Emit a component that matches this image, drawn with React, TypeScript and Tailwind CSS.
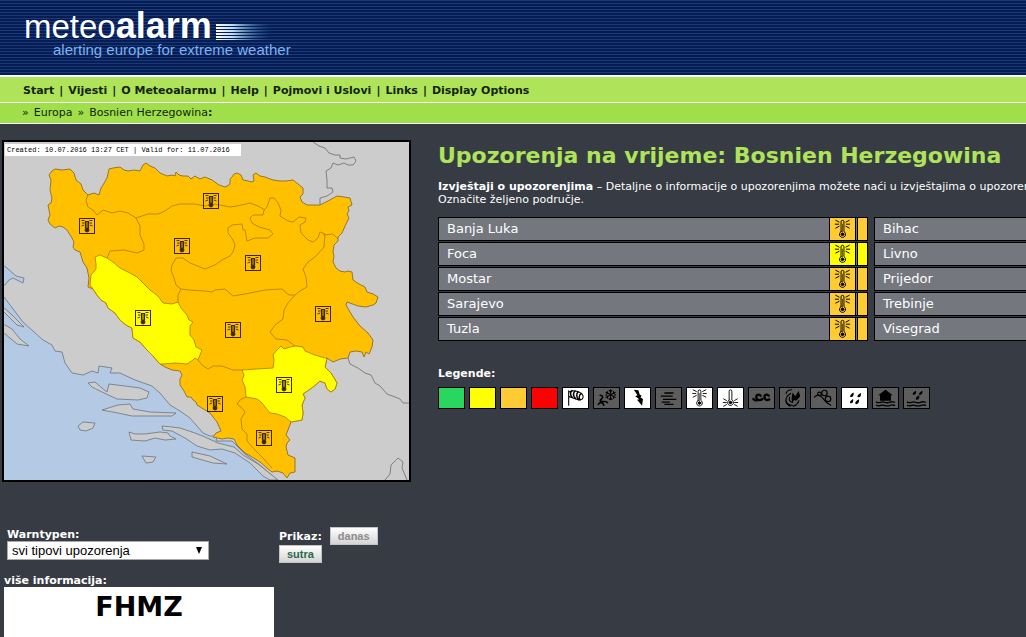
import React from "react";

type Level = "orange" | "yellow";

const navLinks = ["Start", "Vijesti", "O Meteoalarmu", "Help", "Pojmovi i Uslovi", "Links", "Display Options"];

const leftAreas: { name: string; level: Level }[] = [
  { name: "Banja Luka", level: "orange" },
  { name: "Foca", level: "yellow" },
  { name: "Mostar", level: "orange" },
  { name: "Sarajevo", level: "orange" },
  { name: "Tuzla", level: "orange" },
];

const rightAreas: { name: string; level: Level }[] = [
  { name: "Bihac", level: "orange" },
  { name: "Livno", level: "yellow" },
  { name: "Prijedor", level: "orange" },
  { name: "Trebinje", level: "orange" },
  { name: "Visegrad", level: "orange" },
];

const levelClass: Record<Level, string> = {
  orange: "bg-[#fecb34]",
  yellow: "bg-[#ffff00]",
};

const line = { fill: "none", stroke: "#000", strokeWidth: 1.2, strokeLinecap: "round" as const };

const HotIcon = () => (
  <g {...line} strokeWidth="1">
    <path d="M11.500 13.700V3.500a1.500 1.500 0 0 1 3 0v10.200a3.200 3.200 0 1 1-3 0Z" />
    <path d="M13 6v8" strokeWidth=".6" />
    <circle cx="13" cy="16.500" r="1.400" fill="#000" />
    <path d="M6 2 9.500 3.800M5.500 6H9M6 10 9.500 8.200M20 2 16.500 3.800M20.500 6H17M20 10l-3.500-1.800" />
  </g>
);

const ColdIcon = () => (
  <g {...line} strokeWidth="1">
    <path d="M11.500 13.200V3.500a1.500 1.500 0 0 1 3 0v9.700a3.200 3.200 0 1 1-3 0Z" />
    <circle cx="13" cy="16" r="1.400" fill="#000" />
    <path d="M5.500 12 8.500 13.700M5 16h3.500M5.500 20l3-1.700M20.500 12l-3 1.700M21 16h-3.500M20.500 20l-3-1.700" />
  </g>
);

const WindIcon = () => (
  <g {...line}>
    <path d="M5.500 3v16M6 4.500 9 3c4 0 8 .5 11 3.500 2.500 2.500 1.500 6-1.500 6.500-4 .5-8-2.500-12.500-3.500" />
    <path d="M9 3c-2 2-2 5 .5 7.500M12.500 3.300c-2.500 2.500-2 5.500.5 8.200M16 4.300c-2.500 2-2 6 .5 8.500M19.500 6c-2.500 1-3 4.500-1.500 7" strokeWidth="1.600" />
  </g>
);

const SnowIcon = () => (
  <g {...line}>
    <path d="M17.500 2v11M12.500 4.700l10 5.600M22.500 4.700l-10 5.600M16 2.500l1.500 1.500L19 2.500M16 12.500l1.500-1.500 1.500 1.500M12.500 7l1.800-1.200V3.800M22.500 7l-1.800-1.200V3.800M12.500 8.500l1.800.8v2M22.500 8.500l-1.800.8v2" />
    <path d="M6 8c3 0 3.500 2 1.500 4s-2 3 .5 3 5-1 6 1M4 18c2-3 5-2.500 6 1" strokeWidth="1.800" />
  </g>
);

const ThunderIcon = () => <path d="M9 2l5 .5 1.500 5 2 .8-1 2.200 2.500 1.500-1 7.500-5.500-6.500 2.500-.5-4.500-3.500 2.500-1Z" fill="#000" />;

const FogIcon = () => (
  <g {...line} strokeWidth="1.500">
    <path d="M9 5.500h9M5 9h12M7.500 12.500H21M6 15.500h8M9 18h9" />
  </g>
);

const CoastIcon = () => (
  <g {...line} strokeWidth="2.500">
    <path d="M12 8.500c-3-2.500-5.500-.5-4.500 2.500s4.500 3 6.500 1M21 8.500c-3-2.500-5.500-.5-4.500 2.500s3 2.500 5 1.500M4 12c1 1.500 2 2 4 1.500" />
  </g>
);

const FireIcon = () => (
  <g>
    <path d="M12 12l1-7 3 4 4-6c0 4 2 3 1 7l-4 4-2-1-2 3Z" fill="#000" />
    <path d="M6 6c1-3 4-4 6-4M7 9l4-3M8 8c-3 4-3 8 1 10 2 1.500 4 .5 5 2M5.500 13c0 4 2 6 5 7M20 14c-1 3-3 5-6 6M10 10c-1.500 3 0 5 3 6" {...line} />
  </g>
);

const AvalancheIcon = () => (
  <g {...line} strokeWidth="1.300">
    <path d="M3 10c3-3 6-3 9 1s4 6 9 8" />
    <circle cx="14" cy="5.500" r="3" />
    <circle cx="18" cy="12" r="3" />
    <circle cx="8.500" cy="6.500" r="2" />
  </g>
);

const RainIcon = () => (
  <g fill="#000">
    <path d="M12 5c.5 3-.5 5-2.500 5S7.500 7.500 12 5ZM20 5.500c.5 3-.5 4.700-2.500 4.700S15.500 8 20 5.500ZM11.500 12c.5 3-.5 4.700-2.300 4.700S7.500 14 11.500 12ZM18 12.500c.5 3-1 5.300-3 5.300s-1.500-3.300 3-5.300Z" />
  </g>
);

const waves = "M3 15.500c3 2 5-1 8 0s5 1 7 0 3 0 5 0M3 19c3 2 5-1 8 0s5 1 7 0 3 0 5 0";

const FloodIcon = () => (
  <g>
    <path d="m13 2 8 6h-2v6H7V8H5Z" fill="#000" />
    <path d={waves} {...line} strokeWidth="1.500" />
  </g>
);

const RainFloodIcon = () => (
  <g>
    <path d="M12.500 3c.5 3-.5 4.500-2.500 4.500S8 5.500 12.500 3ZM19.500 3c.5 3-.5 4.500-2.500 4.500S15 5.500 19.500 3ZM16 8c.5 3-.5 5-2.500 5s-2-3 2.500-5Z" fill="#000" />
    <path d={waves} {...line} strokeWidth="1.500" />
  </g>
);

const legend: { label: string; bg: string; icon?: () => React.JSX.Element }[] = [
  { label: "green", bg: "bg-[#29d660]" },
  { label: "yellow", bg: "bg-[#ffff00]" },
  { label: "orange", bg: "bg-[#fecb34]" },
  { label: "red", bg: "bg-[#fe0000]" },
  { label: "wind", bg: "bg-white", icon: WindIcon },
  { label: "snow", bg: "bg-[#5d5d5d]", icon: SnowIcon },
  { label: "thunderstorm", bg: "bg-white", icon: ThunderIcon },
  { label: "fog", bg: "bg-[#5d5d5d]", icon: FogIcon },
  { label: "high temperature", bg: "bg-white", icon: HotIcon },
  { label: "low temperature", bg: "bg-white", icon: ColdIcon },
  { label: "coastal event", bg: "bg-[#5d5d5d]", icon: CoastIcon },
  { label: "forest fire", bg: "bg-[#5d5d5d]", icon: FireIcon },
  { label: "avalanche", bg: "bg-[#5d5d5d]", icon: AvalancheIcon },
  { label: "rain", bg: "bg-white", icon: RainIcon },
  { label: "flood", bg: "bg-[#5d5d5d]", icon: FloodIcon },
  { label: "rain and flood", bg: "bg-[#5d5d5d]", icon: RainFloodIcon },
];

const COUNTRY =
  "49,175 52,171 55,169 62,170 70,169 74,173 76,180 81,184 83,190 88,195 94,193 99,195 101,188 103,185 107,178 109,169 113,168 120,167 124,170 128,171 134,170 140,171 143,165 146,163 150,166 155,168 160,173 167,176 172,175 175,176 176,172 179,175 183,176 188,176 191,179 195,176 200,179 205,177 212,180 219,185 225,187 229,185 230,183 230,179 232,177 234,174 237,173 241,175 243,180 248,181 252,182 254,181 253,175 256,173 260,176 265,177 273,180 280,181 286,181 293,180 298,184 303,188 303,194 300,197 302,202 307,205 320,205 328,201 337,196 344,197 350,198 352,205 348,207 349,211 347,214 349,218 346,224 342,233 338,237 338,241 334,245 333,252 334,256 333,262 336,268 340,271 345,272 348,271 352,272 353,280 359,284 365,287 367,292 373,294 378,297 376,303 373,305 366,307 358,306 347,302 346,305 350,312 353,317 360,326 368,333 373,340 372,347 369,354 366,352 364,357 362,352 356,351 350,352 348,358 340,359 333,362 327,358 325,367 331,373 337,383 335,389 331,392 327,389 325,383 320,381 313,387 303,394 305,398 302,405 303,413 302,420 291,422 288,430 286,435 290,440 287,443 286,447 288,455 295,458 295,472 290,473 287,478 283,473 277,471 272,472 267,468 260,462 252,457 245,453 237,445 234,439 228,438 222,439 213,437 216,433 221,431 217,422 210,413 205,410 197,405 196,402 193,400 191,397 187,397 184,391 180,385 180,379 182,375 180,371 172,370 165,367 160,364 153,356 147,350 140,342 133,338 132,328 126,325 120,320 115,313 108,308 106,303 101,300 97,295 93,289 88,287 89,278 87,268 83,262 80,252 75,250 73,247 74,242 72,238 67,230 63,227 59,226 55,228 50,224 48,220 50,215 48,205 51,203 52,198 50,190 51,180";

const LIVNO =
  "95,257 100,255 107,258 113,262 120,268 130,273 137,277 150,290 158,296 163,303 172,304 178,302 181,308 187,315 189,320 193,322 190,326 190,335 194,340 196,347 202,350 198,360 195,358 193,360 187,364 175,363 163,364 160,364 153,356 147,350 140,342 133,338 132,328 126,325 120,320 115,313 108,308 106,303 101,300 97,295 93,289 90,285 91,275 96,269 96,264";

const FOCA =
  "281,346 284,349 290,347 296,346 303,347 305,351 315,355 325,358 327,358 325,367 331,373 337,383 335,389 331,392 327,389 325,383 320,381 313,387 303,394 305,398 302,405 303,413 302,420 291,422 285,417 277,414 270,413 265,407 262,403 257,399 246,397 245,387 242,380 244,375 242,370 256,369 273,368 274,360 273,355 277,350";

const BORDERS = [
  "88,195 86,200 88,207 93,210 97,215 103,210 112,213 120,211 128,213 136,218 148,214 158,214 165,211 172,206 180,204 195,204 205,206 213,204 220,205 230,207 237,206 250,203 258,206 265,210",
  "136,218 140,226 140,235 144,244 144,250 137,253 124,250 110,251 107,258",
  "174,278 171,270 172,265 176,258 183,258 190,263 205,269 215,265 222,260 230,256 233,252 235,245 233,240 228,233 228,228 232,225 242,224 243,230 245,230 247,241 255,238 268,238 273,234 270,230 259,227 252,223 250,218 253,215 263,215 264,210 267,207 270,198 274,198 278,203 281,210 280,216 288,221 293,222 299,217 306,218 305,222 300,225 301,233 308,240 313,242 318,238 320,232 325,234 324,247 315,257 308,262 303,269 306,277 307,287 300,291 295,295 288,303 284,310 283,319 275,325 270,332 276,339 287,340 295,346 303,347",
  "174,278 176,285 181,289 178,295 178,302",
  "181,289 188,290 205,291 212,292 215,290 225,289 233,296 245,294 265,290 282,289 289,295 295,295",
  "198,360 202,365 208,369 213,366 222,366 233,370 243,370",
  "246,397 240,400 237,404 241,407 245,412 241,419 242,429 247,434 247,441 255,450 262,457 272,468",
  "323,235 333,234 338,239",
];

const SEA =
  "4,297 7,301 23,322 43,340 52,345 55,351 62,352 65,363 72,373 83,375 92,371 98,373 99,366 112,368 110,373 120,373 135,380 152,386 160,393 170,405 180,411 190,418 203,433 210,436 217,436 216,441 232,441 245,454 260,465 277,480 277,490 -2,490 -2,290";

const ISLANDS = [
  "162,426 163,430 172,431 185,438 197,446 210,450 222,449 235,453 250,463 263,476 270,480 278,480 258,464 243,455 234,447 218,443 205,437 195,433 180,428 172,427",
  "88,383 95,382 102,388 107,392 109,384 125,386 140,388 149,392 147,398 138,400 117,399 102,392 92,387",
  "102,410 118,405 130,404 133,409 150,412 176,413 172,416 132,416 118,413",
  "78,426 83,422 95,423 93,428 86,431 80,430",
  "129,432 135,434 145,434 160,432 168,433 170,436 176,439 165,440 155,438 145,441 131,440",
  "142,456 156,457 153,462 146,463",
  "192,452 210,456 227,464 213,463 192,457",
  "0,322 12,329 20,339 29,346 17,344 4,333 -2,330",
  "0,304 12,315 24,327 17,325 4,312 -2,308",
];

const MARKERS: [number, number][] = [
  [87, 226], [211, 201], [182, 246], [253, 263], [143, 318],
  [323, 314], [233, 330], [284, 385], [215, 404], [264, 438],
];

function WarningMap() {
  return (
    <div className="relative border-2 border-black">
      <svg viewBox="4 142 405 338" className="block w-full" role="img" aria-label="Bosnien Herzegowina">
        <rect x="4" y="142" width="405" height="338" fill="#cccccc" />
        <g stroke="#6b7480" strokeWidth=".8" strokeLinejoin="round">
          <polygon points={SEA} fill="#b4cae4" />
          <polygon points="0,262 8,269 16,276 24,278 23,283 13,278 9,280 5,285 0,285" fill="#b4cae4" />
          {ISLANDS.map((points) => (
            <polygon key={points} points={points} fill="#cccccc" />
          ))}
        </g>
        <g fill="none" stroke="#6c6c6c" strokeWidth=".8">
          <polyline points="313,142 319,146 325,148 329,153 335,155 340,155 340,158 346,159 354,157 356,161 353,165 348,165 344,163 338,165 333,163 331,168 326,171 327,180 327,188 332,188 333,192 327,196 320,198 320,205" />
          <polyline points="348,358 350,364 358,368 365,373 371,375 375,383 380,386 387,394 395,397 400,399 403,403 409,403" />
          <polyline points="385,480 390,474 391,465 398,458 403,462 402,468 407,480" />
        </g>
        <polygon points={COUNTRY} fill="#ffc000" stroke="#8b6d2c" strokeWidth=".9" strokeLinejoin="round" />
        <g fill="none" stroke="#b58500" strokeWidth=".9" strokeLinejoin="round">
          {BORDERS.map((points) => (
            <polyline key={points} points={points} />
          ))}
          <polygon points={LIVNO} fill="#ffff00" />
          <polygon points={FOCA} fill="#ffff00" />
        </g>
        {MARKERS.map(([x, y]) => (
          <g key={`${x}-${y}`} transform={`translate(${x} ${y})`} fill="none" stroke="#3a2400">
            <rect x="-7.5" y="-7.500" width="15" height="15" />
            <path d="M-1.500 2.500V-4.500h3V2.500" strokeWidth="1.200" />
            <path d="M0-4V3" />
            <circle cx="0" cy="4" r="2" fill="#3a2400" strokeWidth=".8" />
            <path d="M-5.500-5.500h3M-5-3h2.500M-5.500 0l2.500-1M5.500-5.500h-3M5-3H2.500M5.500 0 3-1" strokeWidth=".9" />
          </g>
        ))}
      </svg>
      <p className="absolute top-0.5 left-px w-[236px] bg-white px-0.5 font-['Liberation_Mono',monospace] text-[7px] leading-3 whitespace-nowrap text-black">
        Created: 10.07.2016 13:27 CET | Valid for: 11.07.2016
      </p>
    </div>
  );
}

function AreaList({ areas }: { areas: { name: string; level: Level }[] }) {
  return (
    <ul className="flex w-[430px] flex-col gap-px">
      {areas.map(({ name, level }) => (
        <li key={name} className="flex h-6 border border-black bg-[#74787e]">
          <a href="#" className="flex-1 pl-2 text-[13px] leading-[21px] text-white">
            {name}
          </a>
          <span className={`w-[27px] border-x border-black ${levelClass[level]}`}>
            <svg viewBox="0 0 26 22" className="block h-[22px] w-full">
              <HotIcon />
            </svg>
          </span>
          <span className={`ml-px w-[10px] border-l border-black ${levelClass[level]}`} />
        </li>
      ))}
    </ul>
  );
}

const buttonClass =
  "h-[18px] border border-[#c4c4c4] bg-linear-to-b from-white to-[#d4d4d4] px-[7px] font-['Liberation_Sans',sans-serif] text-[11px] leading-4 font-bold";

export default function App() {
  return (
    <div className="min-h-screen overflow-hidden bg-[#363b44] font-['DejaVu_Sans',Verdana,sans-serif] text-[11px] leading-[13px] text-white">
      <header className="h-[75px] bg-[#08215a] bg-[repeating-linear-gradient(to_bottom,#173a78_0px,#173a78_1px,#061c52_1px,#061c52_3px)] pt-3 pl-6 font-['Liberation_Sans',sans-serif]">
        <div className="flex h-[30px] items-end">
          <a href="#" className="flex items-baseline leading-[30px] text-white">
            <span className="text-[33px]">meteo</span>
            <b className="text-[36px]">alarm</b>
          </a>
          <svg viewBox="0 0 56 16" className="mb-0.5 ml-1 h-4 w-14" aria-hidden="true">
            <defs>
              <linearGradient id="tail" gradientUnits="userSpaceOnUse" x1="0" y1="0" x2="56" y2="0">
                <stop offset="0" stopColor="#ffffff" />
                <stop offset=".3" stopColor="#b9dcf0" />
                <stop offset="1" stopColor="#1c5aa0" stopOpacity="0" />
              </linearGradient>
            </defs>
            {[0, 3, 6, 9, 12, 15].map((y) => (
              <rect key={y} x="0" y={y} width="56" height={y === 15 ? 1 : 2} fill="url(#tail)" />
            ))}
          </svg>
        </div>
        <p className="pl-[29px] text-[15px] leading-4 text-[#7db1f0]">alerting europe for extreme weather</p>
      </header>

      <nav className="flex gap-[5px] border-t-2 border-b border-white bg-[#aee35a] pt-0.5 pl-[23px] text-[11px] leading-[23px] font-bold whitespace-nowrap text-[#14240a]">
        {navLinks.map((label, i) => (
          <React.Fragment key={label}>
            {i > 0 && <span>|</span>}
            <a href="#">{label}</a>
          </React.Fragment>
        ))}
      </nav>
      <nav className="flex gap-[5px] border-b border-white bg-[#9fdf4a] pl-[22px] text-[11px] leading-5 text-[#14240a]">
        <span>»</span>
        <a href="#">Europa</a>
        <span>»</span>
        <span>
          <a href="#">Bosnien Herzegowina</a>
          <b>:</b>
        </span>
      </nav>

      <main className="flex items-start pt-4">
        <section className="w-[411px] shrink-0 pl-0.5">
          <WarningMap />

          <div className="mt-[45px] flex items-start pl-[5px]">
            <div className="w-[272px] pt-[1px]">
              <label htmlFor="types" className="block font-bold">
                Warntypen:
              </label>
              <div className="relative w-[202px]">
                <select
                  id="types"
                  className="block h-[19px] w-full appearance-none border border-[#a9a9a9] bg-white pl-1 font-['Liberation_Sans',sans-serif] text-[13px] leading-4 text-black"
                >
                  <option>svi tipovi upozorenja</option>
                </select>
                <svg viewBox="0 0 8 7" className="pointer-events-none absolute top-1.5 right-1.5 h-[7px] w-2" aria-hidden="true">
                  <path d="M1 0h6L4 7Z" fill="#000" />
                </svg>
              </div>
            </div>
            <div className="w-[110px]">
              <div className="flex items-center gap-2">
                <b>Prikaz:</b>
                <button type="button" className={`${buttonClass} text-[#8c8c8c]`}>
                  danas
                </button>
              </div>
              <button type="button" className={`${buttonClass} block text-[#2a6a45]`}>
                sutra
              </button>
            </div>
          </div>

          <h2 className="mt-[11px] pl-0.5 font-bold">više informacija:</h2>
          <div className="ml-0.5 h-[60px] w-[270px] bg-white pt-1 text-center">
            <a href="#" className="text-[27px] leading-8 font-bold text-black">
              FHMZ
            </a>
          </div>
        </section>

        <section className="box-content w-[866px] shrink-0 pl-[27px]">
          <h1 className="pt-0.5 text-[22px] leading-7 font-bold text-[#aee35a]">Upozorenja na vrijeme: Bosnien Herzegowina</h1>
          <p className="mt-2.5">
            <b>Izvještaji o upozorenjima</b> – Detaljne o informacije o upozorenjima možete naći u izvještajima o upozorenjima.
            <br />
            Označite željeno područje.
          </p>
          <div className="mt-[11px] flex gap-1.5">
            <AreaList areas={leftAreas} />
            <AreaList areas={rightAreas} />
          </div>

          <h2 className="mt-[26px] font-bold">Legende:</h2>
          <ul className="mt-[7px] flex gap-1">
            {legend.map(({ label, bg, icon: Icon }) => (
              <li key={label} className={`h-[22px] w-[27px] border border-black ${bg}`}>
                {Icon && (
                  <svg viewBox="0 0 26 22" className="block h-5 w-full">
                    <Icon />
                  </svg>
                )}
              </li>
            ))}
          </ul>
        </section>
      </main>
    </div>
  );
}
